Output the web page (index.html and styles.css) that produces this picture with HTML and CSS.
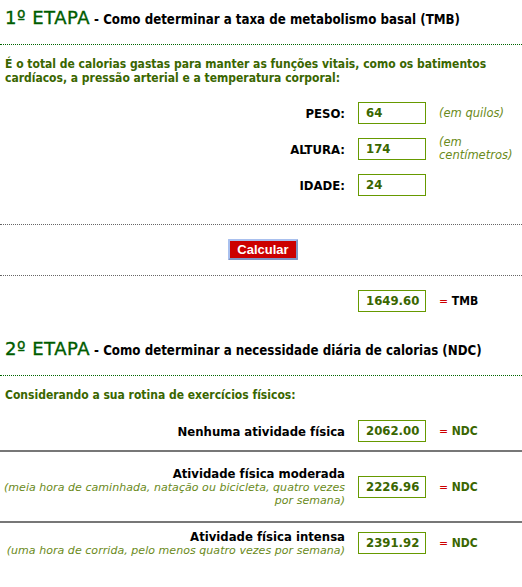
FILE: index.html
```html
<!DOCTYPE html>
<html lang="pt-BR">
<head>
<meta charset="utf-8">
<title>Calculadora de calorias</title>
<link rel="stylesheet" href="styles.css">
</head>
<body>
<section class="stage">
  <h2 class="stage-title"><span class="stage-num">1º ETAPA</span> - Como determinar a taxa de metabolismo basal (TMB)</h2>
  <p class="intro">É o total de calorias gastas para manter as funções vitais, como os batimentos cardíacos, a pressão arterial e a temperatura corporal:</p>
  <div class="fields">
    <label class="field-label">PESO:</label>
    <div class="box">64</div>
    <span class="hint">(em quilos)</span>
    <label class="field-label">ALTURA:</label>
    <div class="box">174</div>
    <span class="hint">(em centímetros)</span>
    <label class="field-label">IDADE:</label>
    <div class="box">24</div>
    <span class="hint"></span>
  </div>
  <div class="actions">
    <button class="btn" type="button">Calcular</button>
  </div>
  <div class="result">
    <span></span>
    <div class="box">1649.60</div>
    <span class="eq"><span class="eq-sign">=</span> <span class="eq-tmb">TMB</span></span>
  </div>
</section>
<section class="stage">
  <h2 class="stage-title"><span class="stage-num">2º ETAPA</span> - Como determinar a necessidade diária de calorias (NDC)</h2>
  <p class="intro">Considerando a sua rotina de exercícios físicos:</p>
  <div class="ndc ndc-1">
    <div class="act"><div class="act-title">Nenhuma atividade física</div></div>
    <div class="box">2062.00</div>
    <span class="eq"><span class="eq-sign">=</span> <span class="eq-ndc">NDC</span></span>
  </div>
  <div class="ndc ndc-2">
    <div class="act"><div class="act-title">Atividade física moderada</div><div class="act-sub">(meia hora de caminhada, natação ou bicicleta, quatro vezes por semana)</div></div>
    <div class="box">2226.96</div>
    <span class="eq"><span class="eq-sign">=</span> <span class="eq-ndc">NDC</span></span>
  </div>
  <div class="ndc ndc-3">
    <div class="act"><div class="act-title">Atividade física intensa</div><div class="act-sub">(uma hora de corrida, pelo menos quatro vezes por semana)</div></div>
    <div class="box">2391.92</div>
    <span class="eq"><span class="eq-sign">=</span> <span class="eq-ndc">NDC</span></span>
  </div>
</section>
</body>
</html>
```
FILE: styles.css
```css
body {
  margin: 0;
  background: #fff;
  font-family: "DejaVu Sans Condensed", "DejaVu Sans", Verdana, sans-serif;
  color: #000;
}
.stage-title {
  margin: 0;
  padding: 9px 5px 13px;
  font-size: 13.2px;
  line-height: 22px;
  font-weight: bold;
  border-bottom: 1px dotted #006600;
}
.stage-num {
  font-family: "DejaVu Sans", Verdana, sans-serif;
  font-size: 18px;
  line-height: 18px;
  letter-spacing: 0.5px;
  font-weight: normal;
  color: #005c00;
  -webkit-text-stroke: 0.35px #005c00;
}
.intro {
  margin: 0;
  padding: 12px 5px 0;
  font-size: 12px;
  line-height: 14px;
  font-weight: bold;
  color: #3a6600;
}
.fields {
  display: grid;
  grid-template-columns: 1fr 68px 78px;
  column-gap: 13px;
  row-gap: 12px;
  align-items: center;
  padding: 17px 5px 28px;
  border-bottom: 1px dotted #666;
}
.field-label {
  text-align: right;
  font-size: 13px;
  font-weight: bold;
}
.box {
  box-sizing: border-box;
  height: 22px;
  border: 1px solid #669900;
  padding: 0 7px;
  font-size: 13px;
  line-height: 20px;
  font-weight: bold;
  color: #3a6600;
}
.hint {
  font-family: "DejaVu Sans", Verdana, sans-serif;
  font-size: 11.5px;
  line-height: 13px;
  font-style: italic;
  color: #6a8a20;
}
.actions {
  display: flex;
  justify-content: center;
  padding: 14px 0 15px;
  border-bottom: 1px dotted #666;
}
.btn {
  box-sizing: border-box;
  width: 70px;
  height: 21px;
  margin-left: 4px;
  padding: 0;
  background: #cc0000;
  color: #fff;
  font-family: "Liberation Sans", Arial, sans-serif;
  font-size: 13px;
  font-weight: bold;
  border: 2px solid;
  border-color: #a9c0ee #7f95c4 #7f95c4 #a9c0ee;
  border-radius: 1px;
}
.result {
  display: grid;
  grid-template-columns: 1fr 68px 78px;
  column-gap: 13px;
  align-items: center;
  padding: 14px 5px 19px;
}
.eq {
  font-size: 12px;
  font-weight: bold;
}
.eq-sign {
  color: #cc0000;
  font-weight: normal;
}
.eq-tmb { color: #000; }
.eq-ndc { color: #3a6600; }
.ndc {
  display: grid;
  grid-template-columns: 1fr 68px 78px;
  column-gap: 13px;
  align-items: center;
  padding: 0 5px 0 0;
}
.ndc-1 { padding-top: 18px; padding-bottom: 8px; border-bottom: 2px solid #777; }
.ndc-2 { padding-top: 14px; padding-bottom: 14px; border-bottom: 2px solid #777; }
.ndc-3 { padding-top: 6px; }
.act { text-align: right; }
.act-title {
  font-size: 13px;
  line-height: 15px;
  font-weight: bold;
}
.act-sub {
  font-family: "DejaVu Sans", Verdana, sans-serif;
  font-size: 11px;
  letter-spacing: 0.05px;
  line-height: 13px;
  font-style: italic;
  color: #6a8a20;
}
```
